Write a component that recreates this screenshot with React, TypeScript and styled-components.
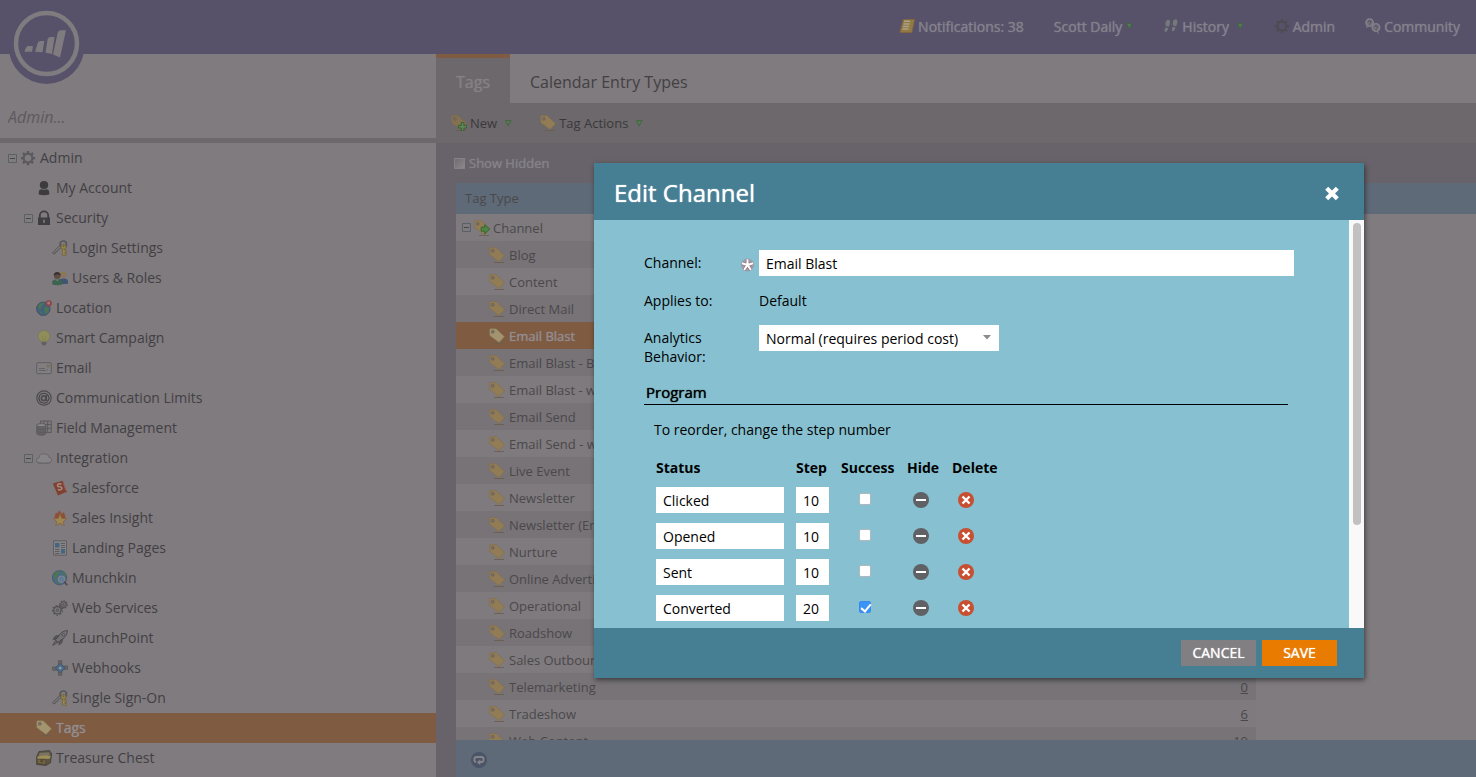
import React from "react";
import styled, { createGlobalStyle, css } from "styled-components";

const color = {
  purple: "#57526a",
  panel: "#7f7b7f",
  strip: "#6c686b",
  backdrop: "#68636a",
  blue: "#5e6a77",
  orange: "#7f5b41",
  rowAlt: "#777377",
  rowPlain: "#7e7a7d",
  text: "#434043",
  gridText: "#4b484b",
  dialogHead: "#467f94",
  dialogBody: "#87c1d1",
};

const Global = createGlobalStyle`
  * { box-sizing: border-box; }
  body { margin: 0; font-family: "Open Sans", "Noto Sans", sans-serif; font-size: 14px; color: ${color.text}; background: ${color.panel}; }
  button, input, select { font: inherit; border: 0; border-radius: 0; margin: 0; }
  a { color: inherit; text-decoration: none; }
`;

/* Regular-width letters with a heavier stroke */
const heavy = css`
  font-weight: 400;
  text-shadow: 0 0 1px currentColor;
`;

/* ---------- icons ---------- */

const Svg = styled.svg`
  display: block;
  flex: none;
  width: 16px;
  height: 16px;
`;

const Key = () => (
  <g>
    <path d="M8.400 5 .8 12.200l.4 1.600 2-.3.6-1.700 1.700-.3.6-1.700L9.800 7" fill="#7c7a7c" stroke="#555355" strokeWidth=".9" />
    <circle cx="11.300" cy="4.200" r="3.200" fill="none" stroke="#5a585a" strokeWidth="1.700" />
    <circle cx="11.500" cy="7" r="2.600" fill="#978650" stroke="#6e6238" strokeWidth=".8" />
    <circle cx="11.500" cy="6.200" r=".9" fill="#6a6045" />
    <path d="M10.400 9v6.300h3.800v-1.800h-1.300v-1.100h1.500v-1.800h-1.500V9z" fill="#978650" stroke="#6e6238" strokeWidth=".7" />
  </g>
);

const TagShape = ({ fill = "#917c55" }: { fill?: string }) => (
  <g>
    <path d="M5 15.500h10" stroke="#6b5f4c" strokeWidth=".9" />
    <path d="M.5 2.200Q.4.700 1.900.6L7.200.7l8.400 8-5.500 5.900L.8 7.700z" fill={fill} stroke="#836f4f" strokeWidth=".6" />
    <circle cx="3.800" cy="3.800" r="1.400" fill="#77737a" stroke="#655b4a" strokeWidth=".7" />
  </g>
);

const gearPath =
  "M6.9 1h2.200l.3 2 1.200.5 1.700-1.200 1.500 1.500-1.200 1.700.5 1.200 2 .3v2.200l-2 .3-.5 1.200 1.200 1.700-1.500 1.500-1.700-1.200-1.200.5-.3 2H6.900l-.3-2-1.200-.5-1.700 1.200-1.500-1.500 1.200-1.700-.5-1.200-2-.3V7l2-.3.5-1.200-1.200-1.700 1.500-1.500 1.700 1.200 1.200-.5zM8 4.800a3.300 3.300 0 1 0 0 6.600 3.300 3.300 0 0 0 0-6.600z";

const shapes: Record<string, React.ReactNode> = {
  gear: <path d={gearPath} fill="#5b595c" fillRule="evenodd" />,
  navGear: <path d={gearPath} fill="#4d4c52" fillRule="evenodd" />,
  person: (
    <g fill="#3d3b3e">
      <ellipse cx="8" cy="4.900" rx="4.200" ry="4" />
      <path d="M2.800 14.500V12c0-1.900 1.400-2.800 3-2.800a4.500 4.500 0 0 0 4.400 0c1.600 0 3 .9 3 2.800v2.500c-3 .9-7.400.9-10.400 0z" />
    </g>
  ),
  lock: (
    <g>
      <path d="M3.800 8V5.600a4.200 4.200 0 0 1 8.400 0V8" fill="none" stroke="#403e41" strokeWidth="1.800" />
      <path d="M2 7.500h12V15H2z" fill="#403e41" />
      <path d="M7.300 9.800h1.500v3H7.300z" fill="#858185" />
    </g>
  ),
  keys: <Key />,
  users: (
    <g>
      <circle cx="11.200" cy="5" r="3.200" fill="#8b7463" />
      <path d="M7.900 4.800c-.2-4 6.600-4.600 6.800 0-1-1.500-4.600-1.800-6.800 0z" fill="#8a7a4e" />
      <path d="M7 13.500V10.500c1-2.500 7.400-2.700 9 0v3c-2 .8-6 .8-9 0z" fill="#3f5572" />
      <circle cx="5.200" cy="5.800" r="3.300" fill="#5f4d43" />
      <path d="M1.700 5.600c-.2-4.600 6.900-5 7.100 0-1.500-1.600-5.200-1.600-7.100 0z" fill="#37302d" />
      <path d="M.2 14.500v-3.300c1-2.600 8.600-2.900 10 0v3.300c-3 1-7 1-10 0z" fill="#3c6450" />
      <path d="m4.200 9.500 1 2 1.200-2z" fill="#8b898b" />
    </g>
  ),
  globePin: (
    <g>
      <circle cx="7.300" cy="8.800" r="6.800" fill="#44617c" stroke="#3d4c5c" strokeWidth=".7" />
      <path d="M2 6c1.600-2.600 4-3.500 6-3.300l-.8 2-2 1.300.3 2L3.700 9.500zM8.300 7.500l3.400-.6 1.600 2-1.600 3.600-2 2-1.200-3.300zM3.300 11l2.300.8.3 2.800z" fill="#4d7554" />
      <circle cx="12.800" cy="3.300" r="3.100" fill="#8a4747" />
      <circle cx="12.600" cy="3" r="1.500" fill="#a87a7a" />
    </g>
  ),
  bulb: (
    <g>
      <path d="M8 .5a5.800 5.800 0 0 0-5.800 5.800c0 2.400 2.300 3.400 2.800 5.200h6c.5-1.800 2.800-2.800 2.800-5.200A5.800 5.800 0 0 0 8 .5z" fill="#918e5c" stroke="#7b784f" strokeWidth=".7" />
      <path d="M6 5.500 7.200 11M10 5.500 8.800 11" stroke="#7f7b4e" strokeWidth=".7" />
      <path d="M5.500 12h5v1.700L9 15.600H7l-1.500-1.900z" fill="#626064" />
    </g>
  ),
  mail: (
    <g fill="none" stroke="#615f62">
      <rect x=".7" y="2.700" width="14.600" height="11" rx="1" fill="#817e81" />
      <path d="M3 8.500h6M3 10.500h7M11 9.800h1" strokeWidth=".9" />
      <path d="M11.200 5h2v2h-2z" stroke="#756f50" />
    </g>
  ),
  at: (
    <g fill="none" stroke="#4d4b4e">
      <circle cx="8" cy="8" r="7.200" strokeWidth="1.200" />
      <circle cx="7.700" cy="8.200" r="2.300" strokeWidth="1.700" />
      <path d="M10.400 5v5c.5 1.600 2.700.8 2.500-2C12.600 1.800 3 1.700 3 8.200c0 4.700 5.200 6 8.400 4" strokeWidth="1.400" />
    </g>
  ),
  fields: (
    <g stroke="#5a585b" strokeWidth=".9">
      <path d="M4.500 1h10.800v11.500H4.500zM4.500 4.500h10.800M8 1v11.500M11.600 1v11.500M4.500 8.300h10.800" fill="#7c797c" />
      <path d="M.8 5.200v8.500c1.600 2 7.800 2 9 0V5.200z" fill="#656366" />
      <ellipse cx="5.300" cy="5.200" rx="4.500" ry="1.600" fill="#8b888b" />
      <path d="M.8 8.200c1.600 2 7.800 2 9 0M.8 11c1.600 2 7.800 2 9 0" fill="none" />
    </g>
  ),
  cloud: (
    <g>
      <path d="M3.600 13.300C-.6 13.100-.4 8.200 3 8c0-3.200 3-5.500 6-3.800 2-.7 4 1.200 4 3.200 3.400.3 3.600 5.600-.3 5.900z" fill="#868487" stroke="#626063" strokeWidth=".8" />
      <path d="M1.500 11.500c2 1.400 10.500 1.600 13 0-.6 1.200-1.200 1.600-2 1.700H3.600c-1 0-1.800-.5-2.100-1.700z" fill="#6b696c" />
    </g>
  ),
  salesforce: (
    <g>
      <path d="M.8 3.500 10.600.8 15 12l-2.800.8L6 15.400z" fill="#80402f" />
      <path d="M9.300 4.500c-1-1.500-4.200-.7-3.800 1.200.5 1.900 3.900.4 4.400 2.200.5 1.900-2.800 2.900-3.900 1.300" fill="none" stroke="#a78a85" strokeWidth="1.500" />
      <path d="m11.300 3.500 3 7.500" stroke="#a4645a" strokeWidth=".8" />
    </g>
  ),
  fireStar: (
    <g>
      <path d="M3 9C2 5.500 3.600 5 3.800 2.600 5.600 3.600 6 3.600 7 .2 9 2 9.300 3 9.700 4L12 2c.4 2.600 2 3.600 1 7z" fill="#8d5036" />
      <path d="m8 3.500 1.700 4.800 4.900.4-3.400 3 1.100 4L8 13.300l-4.300 2.400 1.100-4L1.400 8.700l4.900-.4z" fill="#9c8850" stroke="#8a5f43" strokeWidth=".8" />
    </g>
  ),
  page: (
    <g>
      <path d="M1.500.8h13v14.400h-13z" fill="#858386" stroke="#605f62" />
      <path d="M3 3h4.500v4.500H3zM9 9h4v4.500H9z" fill="#46657f" />
      <path d="M9 3.500h4M9 5.500h4M9 7.500h4M3 9.500h4.500M3 11.500h4.500M3 13.500h4.500" stroke="#5d5b5e" />
    </g>
  ),
  globeSearch: (
    <g>
      <circle cx="7.500" cy="7.700" r="7.200" fill="#47698a" stroke="#3f5260" strokeWidth=".6" />
      <path d="M1.500 5C3 2 6 .7 8.500 1L7 4 4.500 6l.8 2.800L3.200 10.500zM10 1.500c2.500 1 4 3 4.200 5.500l-2.600-1zM3 11.500l3.500.5.5 2.600z" fill="#4f7650" />
      <circle cx="9.500" cy="9.200" r="3.200" fill="#5f7d96" stroke="#85838a" strokeWidth="1.200" />
      <path d="m12 11.700 3.200 3.500" stroke="#4e4c4f" strokeWidth="1.800" />
    </g>
  ),
  gears: (
    <g fill="none" stroke="#525053">
      <circle cx="5.400" cy="10.300" r="3.700" strokeWidth="1.200" fill="#7a777a" />
      <circle cx="5.400" cy="10.300" r="4.800" strokeWidth="1.200" strokeDasharray="1.700 1.650" />
      <circle cx="5.400" cy="10.300" r="1.200" />
      <circle cx="11.500" cy="4.600" r="2.800" strokeWidth="1.100" fill="#7a777a" />
      <circle cx="11.500" cy="4.600" r="3.800" strokeWidth="1.100" strokeDasharray="1.500 1.400" />
      <circle cx="11.500" cy="4.600" r=".8" />
    </g>
  ),
  rocket: (
    <g stroke="#464447" strokeWidth=".8">
      <path d="M15.500.5c-3.700.2-6.200 1.800-8.200 4.500L3.300 9.800l2.900 2.700 4.800-3.600c2.600-2 4.100-4.600 4.500-8.400z" fill="#737174" />
      <path d="M7 5.500 3.500 6 1 9.300l3.300-.4zM10.500 9 10 12.500l-3 2.500.3-3.300z" fill="#5b595c" />
      <path d="M3.600 10.500.6 15.400l5-2.900z" fill="#6e6c6f" />
      <circle cx="11.200" cy="4.800" r="1.200" fill="#8d8a8d" />
    </g>
  ),
  hook: (
    <g>
      <path d="M6.600.7h3.200v4.900H6.600zM6.600 10.500h3.200v4.800H6.600zM.6 7h5v3.200h-5zM10.600 6h5v3.200h-5z" fill="#6b696c" stroke="#4c4a4d" strokeWidth=".6" />
      <path d="m8.200 3.300 4.900 4.800-4.900 4.900L3.200 8.100z" fill="#4c6a87" stroke="#40505f" strokeWidth=".8" />
      <circle cx="8.200" cy="8.100" r="1.500" fill="#8798a6" />
    </g>
  ),
  tag: <TagShape />,
  tagLight: <TagShape fill="#a1946e" />,
  tagPlus: (
    <g>
      <TagShape fill="#83714f" />
      <path d="M10.300 7.500h2.600v2.900h2.900V13h-2.900v2.900h-2.600V13H7.400v-2.600h2.900z" fill="#5b8758" stroke="#33592f" strokeWidth=".8" />
    </g>
  ),
  tagArrow: (
    <g>
      <TagShape />
      <path d="M7.200 7.200h3.500V4.600l5 4.600-5 4.600v-2.600H7.200z" fill="#4c8544" stroke="#2f5f2b" strokeWidth=".8" />
    </g>
  ),
  chest: (
    <g>
      <path d="M3 1.500 13.500.5l2.200 3.300-1.200 9L10 15.500l-9.300-1V6.500z" fill="#5c5443" stroke="#3f3b35" strokeWidth=".7" />
      <path d="M3.600 3 13 2.200l1 3.300L2.600 6.600z" fill="#7b7363" />
      <path d="M1.500 6.500 9.800 5.300l4.900.8-.9 2.700-12.200.6z" fill="#9c8f5a" />
      <path d="M1.300 9.200h8.500v5.200l-8.500-.9zM4.800 9.200v2.500h2V9.200" fill="#75663f" stroke="#484133" strokeWidth=".7" />
    </g>
  ),
  scroll: (
    <g>
      <path d="M4.300 1.500h11.200l-2.600 13H.9z" fill="#937942" stroke="#806838" strokeWidth=".8" />
      <path d="M5 3.300h6M4.600 5.900h6M4 8.500h6M3.500 11.100h6" stroke="#aaa28c" strokeWidth="1.500" />
    </g>
  ),
  feet: (
    <g fill="#74797a">
      <path d="M5.500 1.800c2.600.3 1.700 4.200.3 7L2.700 8C2.100 5 3 1.500 5.500 1.800zM2.400 9.400l2.800.7c-.5 2.700-1.600 4.200-2.900 3.800-1.400-.4-.7-2.800.1-4.500z" />
      <path d="M12.800 1.200c2.600.3 1.700 4.200.3 7L10 7.400c-.6-3 .3-6.500 2.800-6.200zM9.700 8.800l2.800.7c-.5 2.700-1.600 4.200-2.900 3.800-1.400-.4-.7-2.800.1-4.500z" />
    </g>
  ),
  community: (
    <g fill="none" stroke="#85818b">
      <path d="M2.300 7.300 1.600 10" />
      <circle cx="4.600" cy="4.600" r="3.800" fill="#76727c" strokeWidth="1.200" />
      <path d="M3.300 3.900c.2-1.900 2.900-1.500 2.600.1 0 .8-1.200.8-1.200 1.700M4.700 6.500v.9" stroke="#4d4860" />
      <path d="m12.300 12.500 1 3.200" />
      <circle cx="11" cy="9.600" r="3.900" fill="#76727c" strokeWidth="1.200" />
      <path d="M9.800 8.700c.2-1.900 2.900-1.500 2.600.1 0 .8-1.200.8-1.200 1.700M11.200 11.300v.9" stroke="#4d4860" />
    </g>
  ),
};

const Icon = ({ name }: { name: string }) => (
  <Svg viewBox="0 0 16 16" aria-hidden="true">
    {shapes[name]}
  </Svg>
);

const SmallSvg = styled.svg`
  display: block;
  flex: none;
  width: 8px;
  height: 8px;
`;

const GreenArrow = () => (
  <SmallSvg viewBox="0 0 8 8" aria-hidden="true">
    <path d="M1.500 1.500h5.500L4.200 7z" fill="#557a50" stroke="#3d6340" strokeWidth=".8" />
  </SmallSvg>
);

/* ---------- top bar ---------- */

const Page = styled.div`
  display: flex;
  flex-direction: column;
  height: 100vh;
  overflow: hidden;
`;

const TopBar = styled.header`
  position: relative;
  display: flex;
  flex: none;
  justify-content: flex-end;
  height: 54px;
  padding: 0 16px 2px;
  background: ${color.purple};
`;

const Logo = styled.svg`
  position: absolute;
  left: 8px;
  top: 8px;
  width: 77px;
  height: 77px;
`;

const Nav = styled.nav`
  display: flex;
  align-items: center;
  gap: 30px;
  color: #85818c;
  ${heavy}
`;

const NavLink = styled.a`
  display: flex;
  align-items: center;
  gap: 3px;
`;

const Body = styled.div`
  display: grid;
  grid-template-columns: 436px minmax(0, 1fr);
  flex: 1;
  min-height: 0;
`;

/* ---------- tree ---------- */

const Sidebar = styled.aside`
  display: flex;
  flex-direction: column;
  min-height: 0;
  overflow: hidden;
  background: ${color.panel};
`;

const SearchBox = styled.div`
  flex: none;
  height: 89px;
  padding: 48px 8px 0;
  border-bottom: 5px solid ${color.strip};
`;

const SearchInput = styled.input`
  width: 100%;
  height: 30px;
  padding: 0;
  background: transparent;
  font-size: 16px;
  font-style: italic;
  color: #5d5a5d;
  &::placeholder {
    color: #5d5a5d;
    opacity: 1;
  }
`;

const Toggle = styled.span`
  display: flex;
  flex: none;
  align-items: center;
  justify-content: center;
  width: 16px;
  height: 16px;
`;

const ToggleSvg = styled.svg`
  display: block;
  width: 9px;
  height: 9px;
`;

const Minus = () => (
  <ToggleSvg viewBox="0 0 9 9" aria-hidden="true">
    <path d="M.5.5h8v8h-8z" fill="none" stroke="#5a6068" />
    <path d="M2 4.500h5" stroke="#48464a" />
  </ToggleSvg>
);

const TreeRow = styled.a<{ $level: number; $selected?: boolean }>`
  display: flex;
  flex: none;
  align-items: center;
  height: 30px;
  padding-left: ${(p) => 4 + p.$level * 16}px;
  ${(p) =>
    p.$selected &&
    css`
      background: ${color.orange};
      color: #918d90;
      ${heavy}
    `}
`;

const Label = styled.span`
  padding: 0 0 2px 4px;
  white-space: nowrap;
`;

type Node = { label: string; icon: string; level: number; open?: boolean; selected?: boolean };

const tree: Node[] = [
  { label: "Admin", icon: "gear", level: 0, open: true },
  { label: "My Account", icon: "person", level: 1 },
  { label: "Security", icon: "lock", level: 1, open: true },
  { label: "Login Settings", icon: "keys", level: 2 },
  { label: "Users & Roles", icon: "users", level: 2 },
  { label: "Location", icon: "globePin", level: 1 },
  { label: "Smart Campaign", icon: "bulb", level: 1 },
  { label: "Email", icon: "mail", level: 1 },
  { label: "Communication Limits", icon: "at", level: 1 },
  { label: "Field Management", icon: "fields", level: 1 },
  { label: "Integration", icon: "cloud", level: 1, open: true },
  { label: "Salesforce", icon: "salesforce", level: 2 },
  { label: "Sales Insight", icon: "fireStar", level: 2 },
  { label: "Landing Pages", icon: "page", level: 2 },
  { label: "Munchkin", icon: "globeSearch", level: 2 },
  { label: "Web Services", icon: "gears", level: 2 },
  { label: "LaunchPoint", icon: "rocket", level: 2 },
  { label: "Webhooks", icon: "hook", level: 2 },
  { label: "Single Sign-On", icon: "keys", level: 2 },
  { label: "Tags", icon: "tagLight", level: 1, selected: true },
  { label: "Treasure Chest", icon: "chest", level: 1 },
];

/* ---------- main ---------- */

const Main = styled.main`
  display: flex;
  flex-direction: column;
  min-height: 0;
  background: ${color.backdrop};
`;

const Tabs = styled.div`
  display: flex;
  flex: none;
  height: 49px;
  background: ${color.panel};
`;

const Tab = styled.button<{ $active?: boolean }>`
  padding: 2px 20px 0;
  border-top: 4px solid ${(p) => (p.$active ? color.orange : "transparent")};
  background: ${(p) => (p.$active ? color.strip : "transparent")};
  color: ${(p) => (p.$active ? "#858185" : color.text)};
  font-size: 16px;
  ${(p) => p.$active && heavy}
`;

const Toolbar = styled.div`
  display: flex;
  flex: none;
  align-items: center;
  gap: 28px;
  height: 40px;
  padding: 0 15px;
  background: ${color.strip};
`;

const ToolButton = styled.button`
  display: flex;
  align-items: center;
  gap: 3px;
  padding: 0;
  background: none;
  color: #3b383b;
  font-size: 13px;
  & > span {
    padding-right: 4px;
  }
`;

const Filter = styled.label`
  display: flex;
  flex: none;
  align-items: center;
  gap: 4px;
  height: 40px;
  padding-left: 18px;
  font-size: 13px;
  color: #85818a;
  ${heavy}
`;

const FilterBox = styled.input`
  appearance: none;
  width: 11px;
  height: 11px;
  border: 1px solid #85818a;
  background: linear-gradient(135deg, #6f6b70, #8b878b);
`;

const Panel = styled.section`
  display: flex;
  flex: 1;
  flex-direction: column;
  min-height: 0;
  margin-left: 20px;
  background: ${color.panel};
`;

const GridClip = styled.div`
  flex: 1;
  min-height: 0;
  overflow: hidden;
  background: linear-gradient(${color.blue} 31px, transparent 31px);
`;

const Grid = styled.table`
  width: 800px;
  border-collapse: collapse;
  font-size: 13px;
  line-height: 18px;
  color: ${color.gridText};
  td,
  th {
    height: 27px;
    padding: 0;
    font-weight: inherit;
    text-align: left;
  }
  th {
    height: 31px;
    padding: 0 0 2px 9px;
  }
  td:last-child {
    padding-right: 8px;
    text-align: right;
    text-decoration: underline;
  }
`;

const GridRow = styled.tr<{ $tone: "plain" | "alt" | "selected" }>`
  background: ${(p) => ({ plain: color.rowPlain, alt: color.rowAlt, selected: color.orange })[p.$tone]};
  ${(p) =>
    p.$tone === "selected" &&
    css`
      color: #918d90;
      ${heavy}
    `}
`;

const Cell = styled.div<{ $child?: boolean }>`
  display: flex;
  align-items: center;
  padding-left: ${(p) => (p.$child ? 33 : 2)}px;
  & > span:last-child {
    padding-left: ${(p) => (p.$child ? 4 : 3)}px;
    white-space: nowrap;
  }
`;

const PanelFooter = styled.footer`
  display: flex;
  flex: none;
  align-items: center;
  height: 37px;
  padding: 2px 15px 0;
  background: ${color.blue};
`;

const RefreshButton = styled.button`
  padding: 0;
  background: none;
`;

const channels: [string, string?][] = [
  ["Blog"],
  ["Content"],
  ["Direct Mail"],
  ["Email Blast"],
  ["Email Blast - Basic"],
  ["Email Blast - weekly"],
  ["Email Send"],
  ["Email Send - weekly"],
  ["Live Event"],
  ["Newsletter"],
  ["Newsletter (Email)"],
  ["Nurture"],
  ["Online Advertising"],
  ["Operational"],
  ["Roadshow"],
  ["Sales Outbound"],
  ["Telemarketing", "0"],
  ["Tradeshow", "6"],
  ["Web Content", "19"],
];

/* ---------- dialog ---------- */

const Overlay = styled.div`
  position: fixed;
  inset: 0;
  display: flex;
  align-items: flex-start;
  justify-content: flex-end;
  padding: 163px 112px 0;
`;

const Dialog = styled.form`
  width: 770px;
  color: #000;
  box-shadow: 1px 2px 5px rgba(0, 0, 0, 0.5);
`;

const DialogHead = styled.header`
  display: flex;
  align-items: center;
  justify-content: space-between;
  height: 57px;
  padding: 2px 24px 0 20px;
  background: ${color.dialogHead};
  color: #fff;
`;

const Title = styled.h1`
  margin: 0;
  font-size: 24px;
  ${heavy}
`;

const IconButton = styled.button`
  display: block;
  padding: 0;
  background: none;
`;

const Scroller = styled.div`
  display: flex;
  max-height: calc(100vh - 369px);
  overflow: hidden;
  background: ${color.dialogBody};
`;

const Fields = styled.div`
  flex: 1;
  padding: 30px 55px 30px 50px;
`;

const Track = styled.div`
  flex: none;
  width: 15px;
  height: calc(100vh - 369px);
  padding: 3px 3px 3px 4px;
  background: #f9f9f9;
`;

const Thumb = styled.div`
  height: 75%;
  border-radius: 4px;
  background: #c1c1c1;
`;

const Field = styled.div<{ $gap: number }>`
  display: flex;
  margin-bottom: ${(p) => p.$gap}px;
  line-height: 19px;
`;

const FieldLabel = styled.label`
  flex: none;
  width: 96px;
  padding-top: 3px;
`;

const Required = styled.span`
  display: flex;
  flex: none;
  align-items: center;
  width: 19px;
  padding-top: 4px;
`;

const TextInput = styled.input`
  display: block;
  width: 100%;
  height: 26px;
  padding: 0 7px;
  background: #fff;
  color: #000;
`;

const Value = styled.output`
  padding-top: 3px;
`;

const SelectBox = styled.div`
  position: relative;
  width: 240px;
  height: 26px;
`;

const Select = styled.select`
  appearance: none;
  width: 100%;
  height: 26px;
  padding: 0 28px 0 7px;
  background: #fff;
  color: #000;
`;

const Caret = styled.svg`
  position: absolute;
  right: 7px;
  top: 10px;
  width: 10px;
  height: 5px;
  pointer-events: none;
`;

const SectionTitle = styled.h2`
  margin: 0 6px 0 0;
  padding: 0 2px;
  border-bottom: 1px solid #000;
  font-size: 15px;
  line-height: 24px;
  ${heavy}
`;

const Hint = styled.p`
  margin: 15px 0 15px 10px;
  line-height: 20px;
`;

const Steps = styled.table`
  margin-left: 12px;
  border-collapse: collapse;
  table-layout: fixed;
  th,
  td {
    height: 36px;
    padding: 0;
    text-align: left;
  }
  th {
    height: 27px;
    padding-bottom: 2px;
    font-weight: 700;
    line-height: 20px;
  }
`;

const Column = styled.col<{ $width: number }>`
  width: ${(p) => p.$width}px;
`;

const Padded = styled.div<{ $left?: number; $right?: number; $bottom?: number }>`
  padding: 0 ${(p) => p.$right ?? 0}px ${(p) => p.$bottom ?? 0}px ${(p) => p.$left ?? 0}px;
`;

const Check = styled.input`
  display: block;
  appearance: none;
  position: relative;
  width: 12px;
  height: 12px;
  border: 1px solid #b0b8bb;
  border-radius: 2px;
  background: #fff;
  &:checked {
    border-color: #3a8bef;
    background: #3b93f5;
  }
  &:checked::after {
    content: "";
    position: absolute;
    left: 3px;
    top: 0;
    width: 4px;
    height: 8px;
    border: solid #fff;
    border-width: 0 2px 2px 0;
    transform: rotate(40deg);
  }
`;

const DialogFoot = styled.footer`
  display: flex;
  align-items: center;
  justify-content: flex-end;
  gap: 6px;
  height: 50px;
  padding: 0 27px;
  background: ${color.dialogHead};
`;

const Action = styled.button<{ $primary?: boolean }>`
  width: 75px;
  height: 26px;
  padding: 0 0 2px;
  background: ${(p) => (p.$primary ? "#e87b00" : "#817f81")};
  color: #fff;
  ${heavy}
`;

const steps = [
  { status: "Clicked", step: "10", success: false },
  { status: "Opened", step: "10", success: false },
  { status: "Sent", step: "10", success: false },
  { status: "Converted", step: "20", success: true },
];

export default function App() {
  return (
    <Page>
      <Global />
      <TopBar>
        <Nav>
          <NavLink href="#notifications">
            <Icon name="scroll" />
            Notifications: 38
          </NavLink>
          <NavLink href="#user">
            Scott Daily
            <GreenArrow />
          </NavLink>
          <NavLink href="#history">
            <Icon name="feet" />
            History&nbsp;
            <GreenArrow />
          </NavLink>
          <NavLink href="#admin">
            <Icon name="navGear" />
            Admin
          </NavLink>
          <NavLink href="#community">
            <Icon name="community" />
            Community
          </NavLink>
        </Nav>
        <Logo viewBox="0 0 77 77" role="img" aria-label="Home">
          <circle cx="38.500" cy="38" r="38" fill={color.purple} />
          <circle cx="38.500" cy="35.500" r="30.500" fill="none" stroke="#7f7b7f" strokeWidth="4.500" />
          <path
            d="M16.500 43.800c1-4 2-5.800 4-5.800h4.500l-1 5.800zM27 43.800l2.500-8c.5-2 1.500-2.800 3-2.800h3.800l-1.800 11.300zM37.500 44.800l2-13c.5-2 1.500-2.800 3-2.800h4l-2.500 17zM45 46.500l4.500-21c.4-2 1.500-3.300 3.300-3.300H58L52 49.500z"
            fill="#7f7b7f"
          />
        </Logo>
      </TopBar>

      <Body>
        <Sidebar>
          <SearchBox>
            <SearchInput aria-label="Search admin" placeholder="Admin..." />
          </SearchBox>
          {tree.map((n) => (
            <TreeRow key={n.label} href="#tree" $level={n.level} $selected={n.selected}>
              <Toggle>{n.open && <Minus />}</Toggle>
              <Icon name={n.icon} />
              <Label>{n.label}</Label>
            </TreeRow>
          ))}
        </Sidebar>

        <Main>
          <Tabs>
            <Tab $active>Tags</Tab>
            <Tab>Calendar Entry Types</Tab>
          </Tabs>
          <Toolbar>
            <ToolButton>
              <Icon name="tagPlus" />
              <span>New</span>
              <GreenArrow />
            </ToolButton>
            <ToolButton>
              <Icon name="tag" />
              <span>Tag Actions</span>
              <GreenArrow />
            </ToolButton>
          </Toolbar>
          <Filter>
            <FilterBox type="checkbox" />
            Show Hidden
          </Filter>
          <Panel>
            <GridClip>
              <Grid>
                <thead>
                  <tr>
                    <th colSpan={2}>Tag Type</th>
                  </tr>
                </thead>
                <tbody>
                  <GridRow $tone="plain">
                    <td>
                      <Cell>
                        <Toggle>
                          <Minus />
                        </Toggle>
                        <Icon name="tagArrow" />
                        <span>Channel</span>
                      </Cell>
                    </td>
                    <td />
                  </GridRow>
                  {channels.map(([name, count], i) => (
                    <GridRow key={name} $tone={name === "Email Blast" ? "selected" : i % 2 ? "plain" : "alt"}>
                      <td>
                        <Cell $child>
                          <Icon name={name === "Email Blast" ? "tagLight" : "tag"} />
                          <span>{name}</span>
                        </Cell>
                      </td>
                      <td>{count}</td>
                    </GridRow>
                  ))}
                </tbody>
              </Grid>
            </GridClip>
            <PanelFooter>
              <RefreshButton aria-label="Refresh">
                <Svg viewBox="0 0 16 16">
                  <circle cx="8" cy="8" r="8" fill="#4c5468" />
                  <path d="M5 10.200C2.600 9.500 2.800 5 5.500 5h5c2.800 0 2.800 5 0 5H8" fill="none" stroke="#85858b" strokeWidth="1.800" />
                  <path d="M9.300 7.500v5.600L5.800 10.300z" fill="#85858b" />
                </Svg>
              </RefreshButton>
            </PanelFooter>
          </Panel>
        </Main>
      </Body>

      <Overlay>
        <Dialog role="dialog" aria-labelledby="dialog-title" onSubmit={(e) => e.preventDefault()}>
          <DialogHead>
            <Title id="dialog-title">Edit Channel</Title>
            <IconButton type="button" aria-label="Close">
              <Svg viewBox="0 0 16 16">
                <path d="m2.700 3.200 10.600 10.600M13.300 3.200 2.700 13.800" stroke="#fff" strokeWidth="4.200" />
              </Svg>
            </IconButton>
          </DialogHead>
          <Scroller>
            <Fields>
              <Field $gap={12}>
                <FieldLabel htmlFor="channel">Channel:</FieldLabel>
                <Required>
                  <Svg viewBox="0 0 16 16" aria-hidden="true">
                    <circle cx="7.500" cy="8" r="6.500" fill="#a0808f" opacity=".5" />
                    <path d="M7.500 8V2.200M7.500 8l5.500-1.700M7.500 8l3.400 4.800M7.500 8l-3.400 4.800M7.500 8 2 6.300" stroke="#a26874" strokeWidth="3.200" />
                    <path d="M7.500 8V2.200M7.500 8l5.500-1.700M7.500 8l3.400 4.800M7.500 8l-3.400 4.800M7.500 8 2 6.300" stroke="#fff" strokeWidth="2" />
                  </Svg>
                </Required>
                <TextInput id="channel" defaultValue="Email Blast" />
              </Field>
              <Field $gap={15}>
                <FieldLabel htmlFor="applies">Applies to:</FieldLabel>
                <Required />
                <Value id="applies">Default</Value>
              </Field>
              <Field $gap={14}>
                <FieldLabel htmlFor="behavior">Analytics Behavior:</FieldLabel>
                <Required />
                <SelectBox>
                  <Select id="behavior" defaultValue="normal">
                    <option value="normal">Normal (requires period cost)</option>
                  </Select>
                  <Caret viewBox="0 0 10 5" aria-hidden="true">
                    <path d="M1 0h8L5 4.500z" fill="#8c8c8c" />
                  </Caret>
                </SelectBox>
              </Field>
              <SectionTitle>Program</SectionTitle>
              <Hint>To reorder, change the step number</Hint>
              <Steps>
                <colgroup>
                  <Column $width={140} />
                  <Column $width={45} />
                  <Column $width={66} />
                  <Column $width={45} />
                  <Column $width={60} />
                </colgroup>
                <thead>
                  <tr>
                    <th>Status</th>
                    <th>Step</th>
                    <th>Success</th>
                    <th>Hide</th>
                    <th>Delete</th>
                  </tr>
                </thead>
                <tbody>
                  {steps.map((s) => (
                    <tr key={s.status}>
                      <td>
                        <Padded $right={12}>
                          <TextInput aria-label="Status" defaultValue={s.status} />
                        </Padded>
                      </td>
                      <td>
                        <Padded $right={12}>
                          <TextInput aria-label="Step" defaultValue={s.step} />
                        </Padded>
                      </td>
                      <td>
                        <Padded $left={18} $bottom={2}>
                          <Check type="checkbox" aria-label="Success" defaultChecked={s.success} />
                        </Padded>
                      </td>
                      <td>
                        <Padded $left={6}>
                          <IconButton type="button" aria-label="Hide">
                            <Svg viewBox="0 0 16 16">
                              <circle cx="8" cy="8" r="8" fill="#606164" />
                              <path d="M3 8h10" stroke="#fff" strokeWidth="2" />
                            </Svg>
                          </IconButton>
                        </Padded>
                      </td>
                      <td>
                        <Padded $left={6}>
                          <IconButton type="button" aria-label="Delete">
                            <Svg viewBox="0 0 16 16">
                              <circle cx="8" cy="8" r="8" fill="#c84f32" />
                              <path d="m4.500 4.500 7 7M11.500 4.500l-7 7" stroke="#fff" strokeWidth="2.400" />
                            </Svg>
                          </IconButton>
                        </Padded>
                      </td>
                    </tr>
                  ))}
                </tbody>
              </Steps>
            </Fields>
            <Track>
              <Thumb />
            </Track>
          </Scroller>
          <DialogFoot>
            <Action type="button">CANCEL</Action>
            <Action type="submit" $primary>
              SAVE
            </Action>
          </DialogFoot>
        </Dialog>
      </Overlay>
    </Page>
  );
}
